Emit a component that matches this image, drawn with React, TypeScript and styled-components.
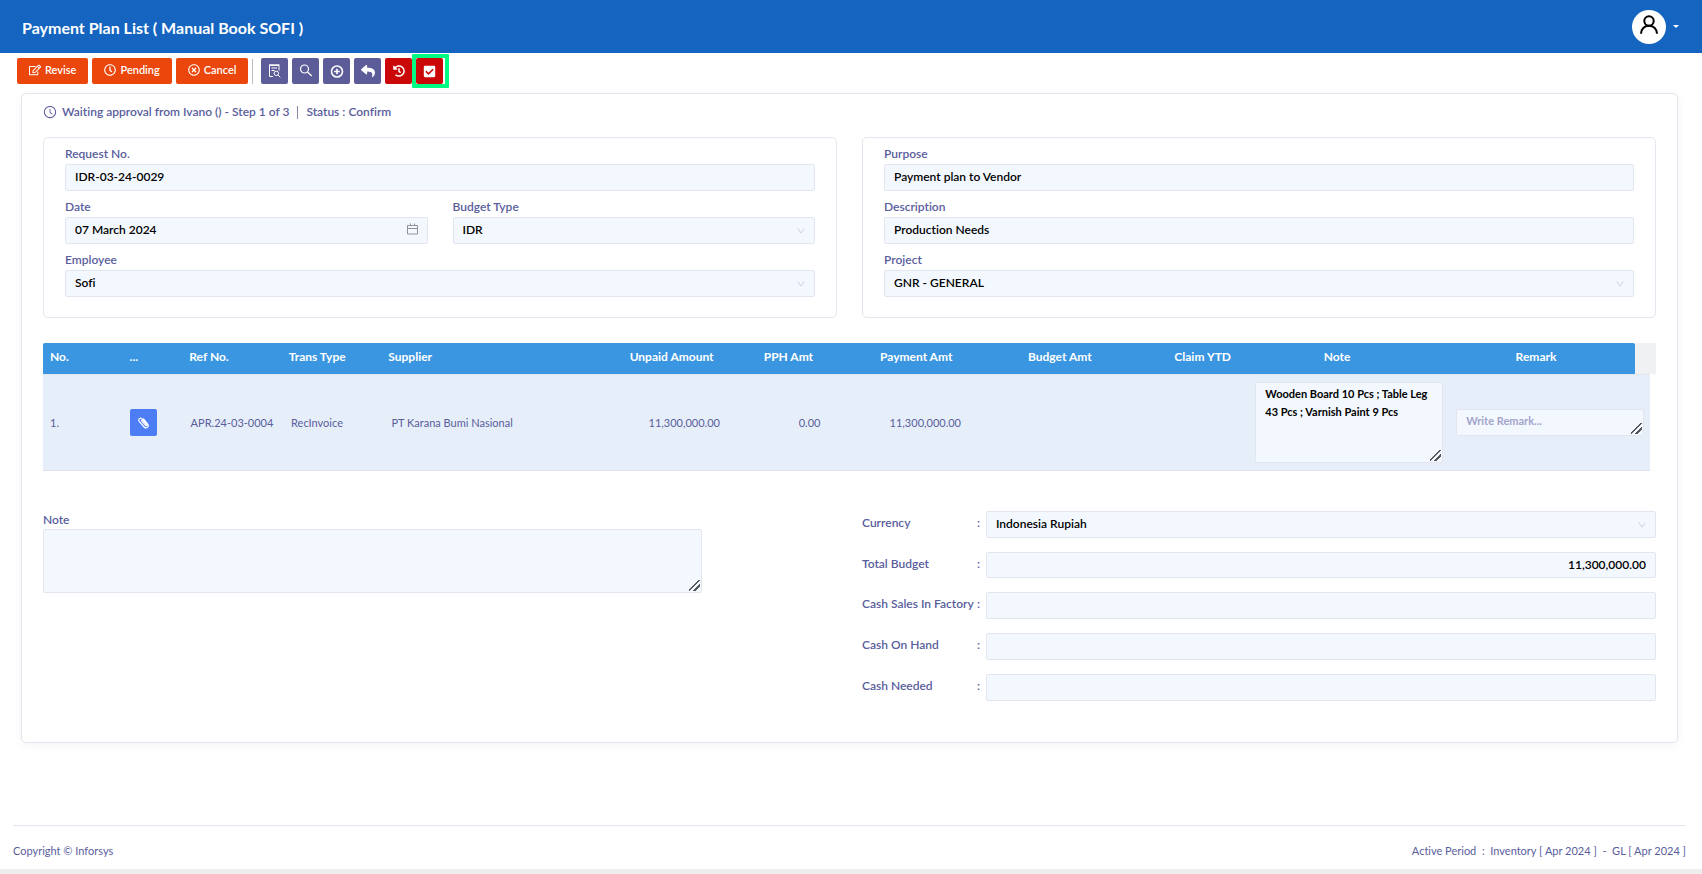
import React, { useId } from "react";
import styled, { createGlobalStyle } from "styled-components";
import { FaRegEdit, FaRegClock, FaRegTimesCircle, FaReply, FaHistory, FaCheckSquare } from "react-icons/fa";
import { AiOutlineDown, AiOutlineClockCircle } from "react-icons/ai";

const GlobalStyle = createGlobalStyle`
  * { box-sizing: border-box; }
  body {
    margin: 0;
    background: #fff;
    color: #595d9c;
    font-family: Lato, "Open Sans", sans-serif;
    font-size: 11px;
    line-height: 18px;
    font-variant-ligatures: none;
  }
  button, input, select, textarea { font: inherit; }
`;

const Page = styled.div`
  min-height: 100vh;
  display: flex;
  flex-direction: column;
  border-bottom: 5px solid #eeeeee;
`;

const Header = styled.header`
  height: 53px;
  display: flex;
  align-items: center;
  justify-content: space-between;
  padding: 0 23px 0 22px;
  background: #1565c0;
  color: #fff;
`;

const Title = styled.h1`
  margin: 3px 0 0;
  font-size: 16px;
  line-height: 24px;
  font-weight: 700;
`;

const UserButton = styled.button`
  display: flex;
  align-items: center;
  gap: 7px;
  padding: 0;
  border: 0;
  background: none;
`;

const Avatar = styled.span`
  width: 34px;
  height: 34px;
  display: flex;
  justify-content: center;
  padding-top: 5px;
  border-radius: 50%;
  background: #fff;
`;

const Caret = styled.span`
  border: 3px solid transparent;
  border-top-color: #fff;
  border-bottom: 0;
`;

const Toolbar = styled.div`
  display: flex;
  align-items: center;
  gap: 4px;
  padding: 5px 17px 9px;
`;

const ActionButton = styled.button`
  height: 26px;
  display: flex;
  align-items: center;
  gap: 4px;
  padding: 0 12px 2px;
  border: 0;
  border-radius: 2px;
  background: #eb460b;
  color: #fff;
  font-weight: 600;
`;

const Divider = styled.span`
  width: 1px;
  height: 25px;
  margin-right: 4px;
  background: #bdbdbd;
`;

const IconButton = styled.button<{ $tone?: string }>`
  position: relative;
  width: 27px;
  height: 26px;
  display: grid;
  place-items: center;
  padding: 0;
  border: 0;
  border-radius: 2px;
  background: ${(p) => p.$tone || "#5c5c99"};
  color: #fff;
`;

const Highlight = styled.span`
  position: absolute;
  inset: -4px -6px -4px -4px;
  border: 4px solid #00fb83;
  border-radius: 1px;
`;

const Card = styled.main`
  margin: 0 24px 0 21px;
  padding: 9px 21px 41px;
  border: 1px solid #e4e6ef;
  border-radius: 5px;
  box-shadow: 0 2px 8px rgba(60, 60, 100, 0.06);
`;

const Status = styled.p`
  display: flex;
  align-items: center;
  gap: 5px;
  margin: 0 0 16px;
  font-size: 12px;
  font-weight: 600;
`;

const Bar = styled.span`
  width: 1px;
  height: 13px;
  margin: 0 3px;
  background: #8a84a8;
`;

const Columns = styled.div`
  display: grid;
  grid-template-columns: 1fr 1fr;
  gap: 25px;
`;

const Panel = styled.section`
  display: grid;
  grid-template-columns: 1fr 1fr;
  gap: 6px 25px;
  padding: 6px 21px 20px;
  border: 1px solid #e4e6ef;
  border-radius: 5px;
`;

const FieldBox = styled.div<{ $wide?: boolean }>`
  grid-column: ${(p) => (p.$wide ? "1 / -1" : "auto")};
  display: flex;
  flex-direction: column;
`;

const Label = styled.label`
  font-size: 12px;
  line-height: 20px;
  font-weight: 600;
`;

const NoteLabel = styled(Label)`
  line-height: 18px;
`;

const Control = styled.div<{ $iconTop?: number }>`
  position: relative;
  flex: 1;
  min-width: 0;
  display: flex;

  svg {
    position: absolute;
    right: 9px;
    top: ${(p) => p.$iconTop ?? 9}px;
    color: #c5c6dc;
    pointer-events: none;
  }
`;

const TextInput = styled.input<{ $right?: boolean; $short?: boolean }>`
  width: 100%;
  height: ${(p) => (p.$short ? 26 : 27)}px;
  padding: 0 9px 2px;
  border: 1px solid #e4e6ef;
  border-radius: 2px;
  background: #f3f8ff;
  color: #000;
  font-size: 12px;
  font-weight: 600;
  outline: 0;
  text-align: ${(p) => (p.$right ? "right" : "left")};
`;

const Select = styled.select`
  width: 100%;
  height: 27px;
  padding: 0 9px 1px;
  border: 1px solid #e4e6ef;
  border-radius: 2px;
  background: #f3f8ff;
  color: #000;
  font-size: 12px;
  font-weight: 600;
  appearance: none;
  outline: 0;
`;

const TextArea = styled.textarea<{ $h: number }>`
  display: block;
  width: 100%;
  height: ${(p) => p.$h}px;
  padding: 2px 0 2px 9px;
  border: 1px solid #e4e6ef;
  border-radius: 2px;
  background: #f3f8ff;
  color: #000;
  font-weight: 700;
  outline: 0;
  overflow: hidden;

  &::placeholder {
    color: #a3a3cb;
  }

  &::-webkit-resizer {
    background: linear-gradient(
        135deg,
        transparent 43%,
        #55585c 43% 54%,
        transparent 54% 68%,
        #55585c 68% 79%,
        transparent 79%
      )
      3px 3px / 11px 11px no-repeat;
  }
`;

const Table = styled.table`
  display: block;
  margin-top: 25px;
`;

const HeadGroup = styled.thead`
  display: block;
  padding-right: 21px;
  background: #f0f1f3;
`;

const BodyGroup = styled.tbody`
  display: block;
  padding-right: 6px;
`;

const columnTracks = "80fr 60fr 100fr 100fr 200fr 140fr 100fr 140fr 140fr 140fr 200fr 200fr";

const HeadRow = styled.tr`
  display: grid;
  grid-template-columns: ${columnTracks};
  height: 31px;
  background: #3a96e0;
  border-radius: 2px 2px 0 0;
  color: #fff;
`;

const BodyRow = styled.tr`
  display: grid;
  grid-template-columns: ${columnTracks};
  align-items: center;
  height: 97px;
  border-top: 1px solid #e4e6ef;
  border-bottom: 1px solid #dfe4ec;
  background: #e6eff9;
`;

type Align = "left" | "right" | "center";

const HeadCell = styled.th<{ $align: Align }>`
  min-width: 0;
  padding: 5px 6px 5px 7px;
  font-size: 12px;
  font-weight: 700;
  text-align: ${(p) => p.$align};
`;

const Cell = styled.td<{ $align?: Align }>`
  min-width: 0;
  padding: 0 6px 0 7px;
  text-align: ${(p) => p.$align || "left"};
`;

const AttachButton = styled.button`
  width: 27px;
  height: 27px;
  display: grid;
  place-items: center;
  padding: 0;
  border: 0;
  border-radius: 2px;
  background: #4d7df5;
  color: #fff;
`;

const Summary = styled(Columns)`
  margin-top: 40px;
`;

const NoteBox = styled.div`
  width: 83%;
  display: flex;
  flex-direction: column;
`;

const Totals = styled.div`
  display: flex;
  flex-direction: column;
  gap: 14px;
`;

const TotalRow = styled.div`
  display: flex;
`;

const TotalLabel = styled.label`
  width: 124px;
  display: flex;
  justify-content: space-between;
  padding: 3px 6px 0 0;
  font-size: 12px;
  font-weight: 600;
`;

const Footer = styled.footer`
  display: flex;
  justify-content: space-between;
  margin: auto 16px 0 13px;
  padding: 16px 0 9px;
  border-top: 1px solid #e4e6ef;
`;

const PersonIcon = () => (
  <svg width="20" height="20" viewBox="0 0 20 20" fill="none" stroke="#000" strokeWidth="2">
    <circle cx="10" cy="6" r="4.700" />
    <path d="M2 18.800c0-4.800 3.400-8 8-8s8 3.200 8 8" />
  </svg>
);

const DocumentSearchIcon = () => (
  <svg width="13" height="14" viewBox="0 0 13 14" fill="none" stroke="#fff">
    <path d="M5 12.500H1.500v-11h9.500v5M3.500 4h5.500M3.500 6.500h3M1 .800h10.500" />
    <circle cx="8.300" cy="9.300" r="2.200" />
    <path d="m10 11 2.300 2.300" />
  </svg>
);

const SearchIcon = () => (
  <svg width="14" height="14" viewBox="0 0 14 14" fill="none" stroke="#fff" strokeWidth="1.200">
    <circle cx="5.500" cy="5" r="4" />
    <path d="m8.500 8 4.300 4" />
  </svg>
);

const AddIcon = () => (
  <svg width="14" height="14" viewBox="0 0 14 14" fill="none" stroke="#fff" strokeWidth="1.600">
    <circle cx="7" cy="7.500" r="5.500" />
    <path d="M7 4.700v5.600M4.200 7.500h5.600" />
  </svg>
);

const CalendarIcon = () => (
  <svg width="12" height="12" viewBox="0 0 12 12" fill="none" stroke="#8f9398">
    <path d="M.500 2.500h10v8.500h-10zM.500 5.500h10M3.500.500v2.500M7.500.500v2.500" />
  </svg>
);

const ClipIcon = () => (
  <svg width="13" height="13" viewBox="0 0 13 13" fill="none" stroke="#fff" strokeWidth="1.200" strokeLinecap="round">
    <path d="M4.400 4.600l4.400 5c.600.600 1.500-.100.900-.900L5 3C3.300 1.100.700 3.200 2.200 5.300l4.900 5.700c2.200 2.300 5.500-.400 3.600-2.900L6.500 3" />
  </svg>
);

type FieldProps = { label: string; value: string; wide?: boolean; kind?: "text" | "date" | "select" };

function Field({ label, value, wide, kind = "text" }: FieldProps) {
  const id = useId();
  return (
    <FieldBox $wide={wide}>
      <Label htmlFor={id}>{label}</Label>
      <Control $iconTop={kind === "date" ? 6 : 9}>
        {kind === "select" ? (
          <>
            <Select id={id} defaultValue={value}>
              <option>{value}</option>
            </Select>
            <AiOutlineDown size={10} />
          </>
        ) : (
          <TextInput id={id} defaultValue={value} />
        )}
        {kind === "date" && <CalendarIcon />}
      </Control>
    </FieldBox>
  );
}

function Total({ label, value = "", select }: { label: string; value?: string; select?: boolean }) {
  const id = useId();
  return (
    <TotalRow>
      <TotalLabel htmlFor={id}>
        <span>{label}</span>
        <span>:</span>
      </TotalLabel>
      <Control>
        {select ? (
          <>
            <Select id={id} defaultValue={value}>
              <option>{value}</option>
            </Select>
            <AiOutlineDown size={10} />
          </>
        ) : (
          <TextInput id={id} $right $short={value !== ""} defaultValue={value} />
        )}
      </Control>
    </TotalRow>
  );
}

const headings: [string, Align][] = [
  ["No.", "left"],
  ["...", "left"],
  ["Ref No.", "left"],
  ["Trans Type", "left"],
  ["Supplier", "left"],
  ["Unpaid Amount", "right"],
  ["PPH Amt", "right"],
  ["Payment Amt", "right"],
  ["Budget Amt", "right"],
  ["Claim YTD", "right"],
  ["Note", "center"],
  ["Remark", "center"],
];

export default function App() {
  return (
    <>
      <GlobalStyle />
      <Page>
        <Header>
          <Title>Payment Plan List ( Manual Book SOFI )</Title>
          <UserButton aria-label="Account">
            <Avatar>
              <PersonIcon />
            </Avatar>
            <Caret />
          </UserButton>
        </Header>

        <Toolbar>
          <ActionButton><FaRegEdit size={12} />Revise</ActionButton>
          <ActionButton><FaRegClock size={12} />Pending</ActionButton>
          <ActionButton><FaRegTimesCircle size={12} />Cancel</ActionButton>
          <Divider />
          <IconButton aria-label="Preview"><DocumentSearchIcon /></IconButton>
          <IconButton aria-label="Search"><SearchIcon /></IconButton>
          <IconButton aria-label="Add"><AddIcon /></IconButton>
          <IconButton aria-label="Back"><FaReply size={14} /></IconButton>
          <IconButton aria-label="History" $tone="#cb0808"><FaHistory size={12} /></IconButton>
          <IconButton aria-label="Approve" $tone="#cb0808"><FaCheckSquare size={13} /><Highlight /></IconButton>
        </Toolbar>

        <Card>
          <Status>
            <AiOutlineClockCircle size={14} />
            <span>Waiting approval from Ivano () - Step 1 of 3</span>
            <Bar />
            <span>Status : Confirm</span>
          </Status>

          <Columns>
            <Panel>
              <Field wide label="Request No." value="IDR-03-24-0029" />
              <Field label="Date" value="07 March 2024" kind="date" />
              <Field label="Budget Type" value="IDR" kind="select" />
              <Field wide label="Employee" value="Sofi" kind="select" />
            </Panel>
            <Panel>
              <Field wide label="Purpose" value="Payment plan to Vendor" />
              <Field wide label="Description" value="Production Needs" />
              <Field wide label="Project" value="GNR - GENERAL" kind="select" />
            </Panel>
          </Columns>

          <Table>
            <HeadGroup>
              <HeadRow>
                {headings.map(([text, align]) => (
                  <HeadCell key={text} $align={align}>{text}</HeadCell>
                ))}
              </HeadRow>
            </HeadGroup>
            <BodyGroup>
              <BodyRow>
                <Cell>1.</Cell>
                <Cell><AttachButton aria-label="Attachment"><ClipIcon /></AttachButton></Cell>
                <Cell>APR.24-03-0004</Cell>
                <Cell>RecInvoice</Cell>
                <Cell>PT Karana Bumi Nasional</Cell>
                <Cell $align="right">11,300,000.00</Cell>
                <Cell $align="right">0.00</Cell>
                <Cell $align="right">11,300,000.00</Cell>
                <Cell />
                <Cell />
                <Cell>
                  <TextArea $h={81} aria-label="Row note" defaultValue="Wooden Board 10 Pcs ; Table Leg 43 Pcs ; Varnish Paint 9 Pcs" />
                </Cell>
                <Cell>
                  <TextArea $h={27} aria-label="Remark" placeholder="Write Remark..." />
                </Cell>
              </BodyRow>
            </BodyGroup>
          </Table>

          <Summary>
            <NoteBox>
              <NoteLabel htmlFor="note">Note</NoteLabel>
              <TextArea id="note" $h={64} />
            </NoteBox>
            <Totals>
              <Total label="Currency" value="Indonesia Rupiah" select />
              <Total label="Total Budget" value="11,300,000.00" />
              <Total label="Cash Sales In Factory" />
              <Total label="Cash On Hand" />
              <Total label="Cash Needed" />
            </Totals>
          </Summary>
        </Card>

        <Footer>
          <span>Copyright © Inforsys</span>
          <span>Active Period &nbsp;:&nbsp; Inventory [ Apr 2024 ] &nbsp;-&nbsp; GL [ Apr 2024 ]</span>
        </Footer>
      </Page>
    </>
  );
}
